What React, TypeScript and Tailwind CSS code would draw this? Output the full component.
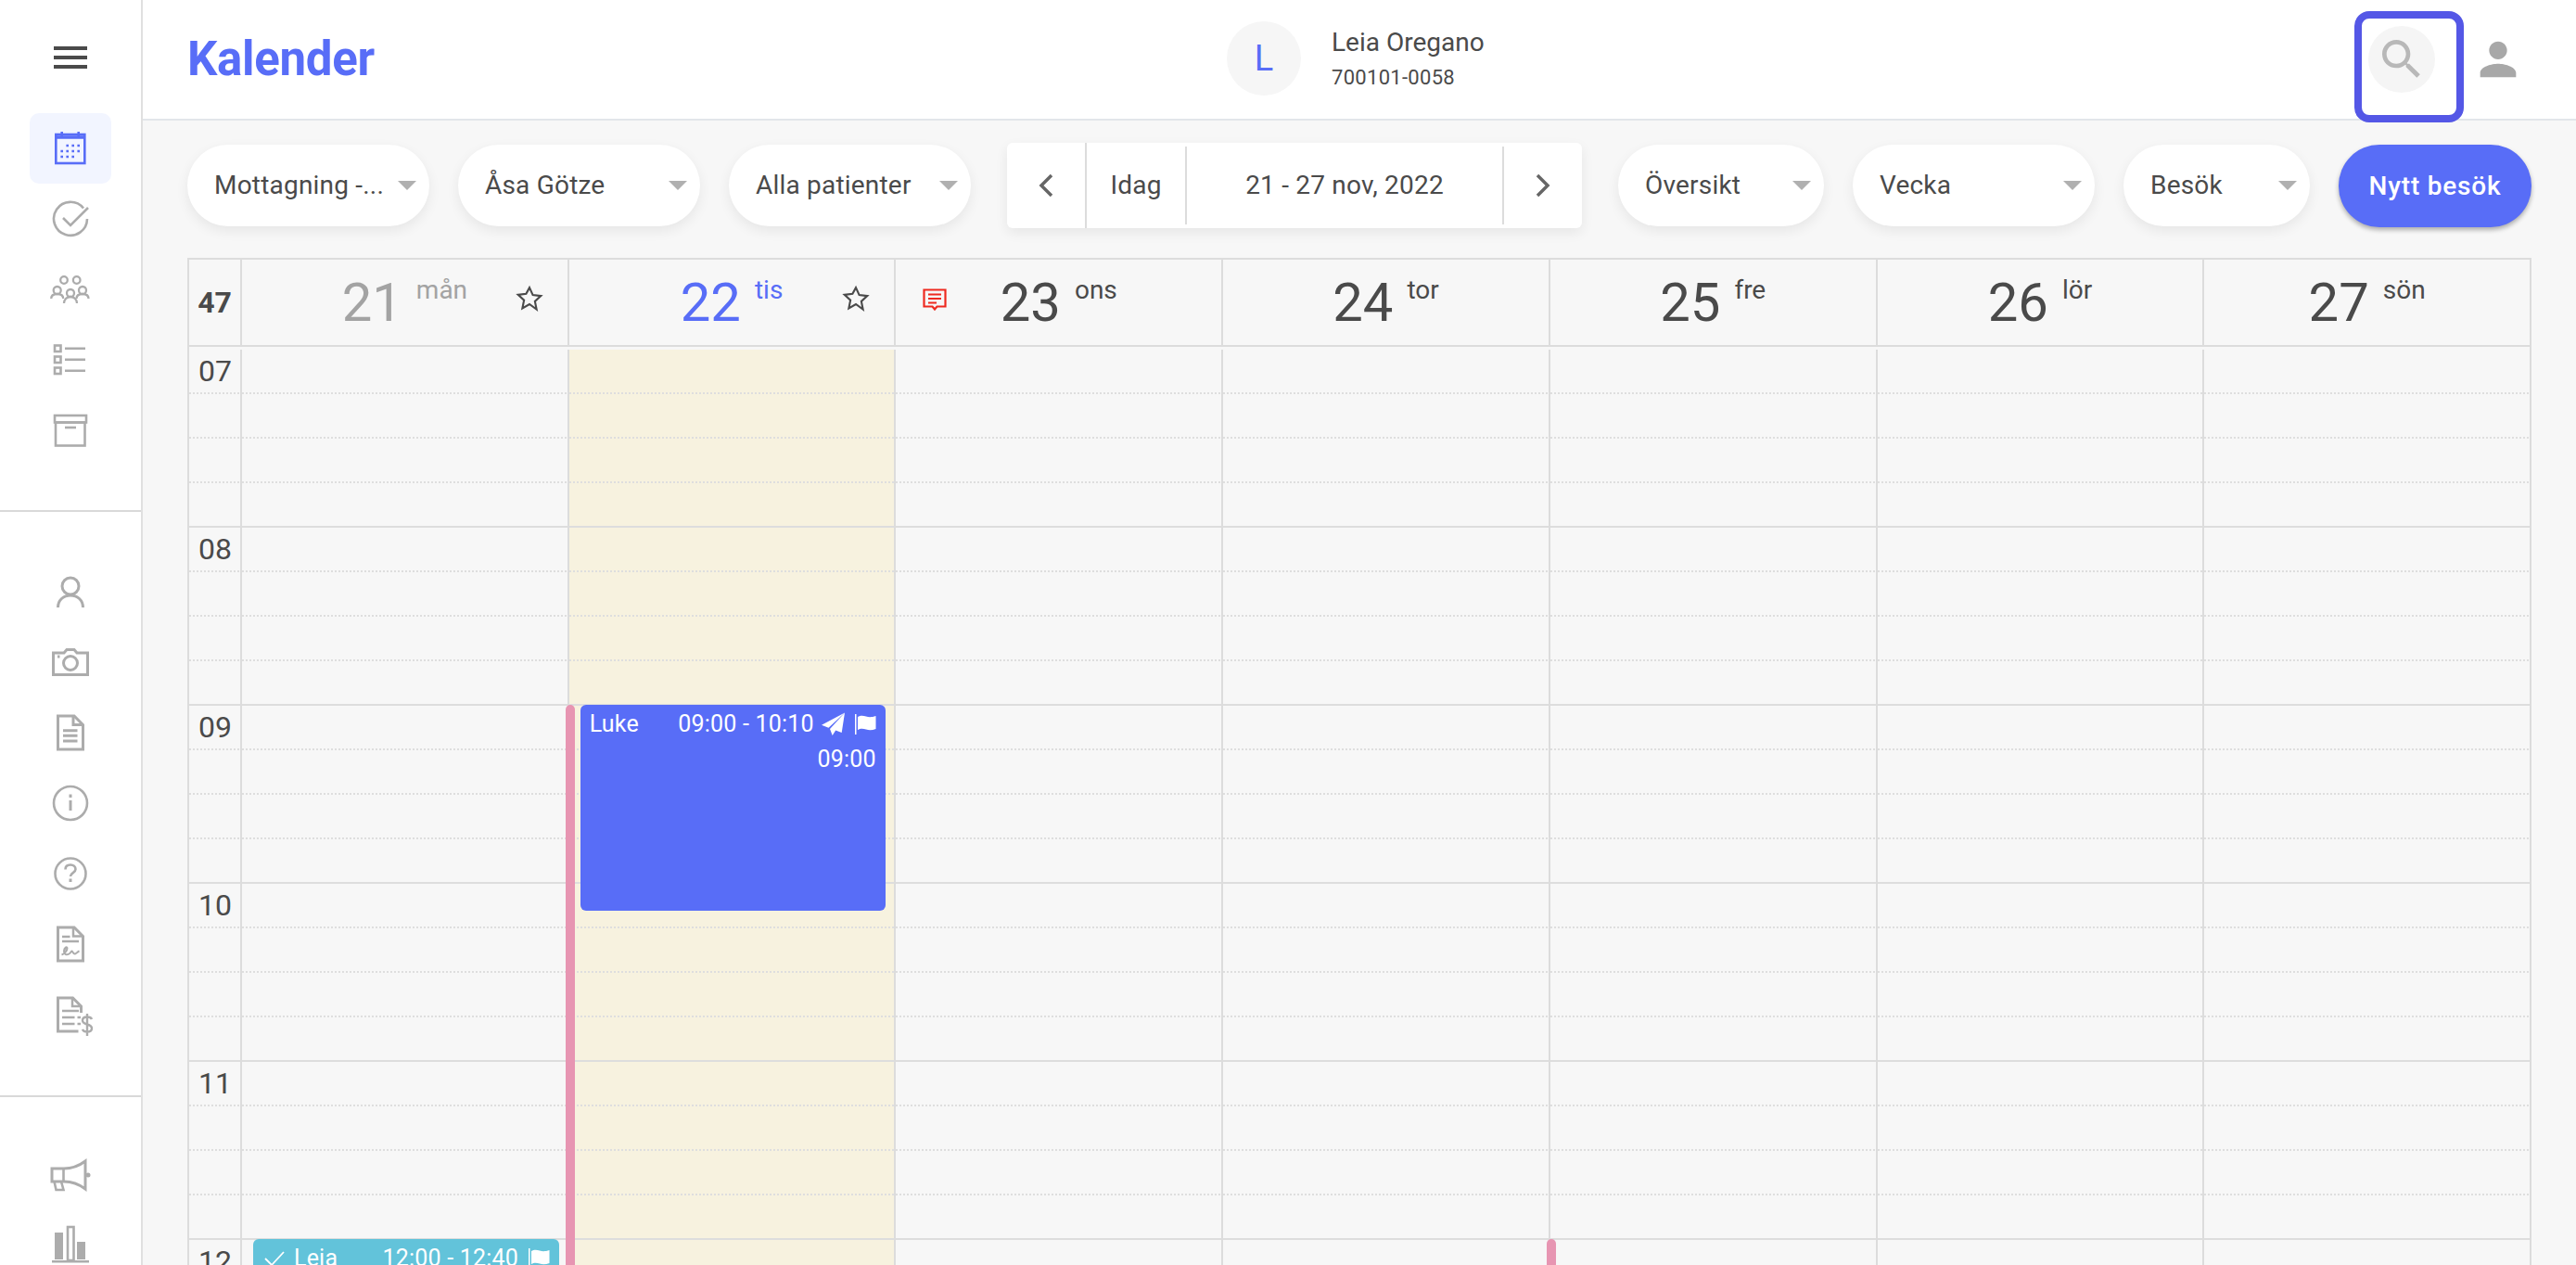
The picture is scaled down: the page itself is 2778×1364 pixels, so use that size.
import React from "react";

const G = "#acacac";
const BLUE = "#586df7";

function Stroke({ children, color = G, w = 2.6 }: { children: React.ReactNode; color?: string; w?: number }) {
  return (
    <svg width={44} height={44} viewBox="0 0 44 44" fill="none" stroke={color} strokeWidth={w} className="overflow-visible">
      {children}
    </svg>
  );
}

function Person({ x, y, big }: { x: number; y: number; big?: boolean }) {
  return (
    <g transform={`translate(${x} ${y})`}>
      <circle cx="0" cy="0" r="4" />
      <path d={big ? "M-7 11c0-4 3-7 7-7s7 3 7 7" : "M-6.500 9c0-3 2.500-5 6.500-5s6.500 2 6.500 5"} />
    </g>
  );
}

const icons: Record<string, React.ReactNode> = {
  calendar: (
    <Stroke color={BLUE}>
      <rect x="6.300" y="7" width="31" height="31" />
      <path d="M6 10h32" strokeWidth="3.500" />
      <path d="M12.700 4v5M30.700 4v5" />
      <path d="M17.400 19h2.600M23.400 19h2.600M29.400 19h2.600M11.400 25h2.600M17.400 25h2.600M23.400 25h2.600M29.400 25h2.600M11.400 31h2.600M17.400 31h2.600M23.400 31h2.600" />
    </Stroke>
  ),
  check: (
    <Stroke>
      <path d="M36 10.500A18 18 0 1 0 40 22" />
      <path d="M14 21l8 8L41 10" />
    </Stroke>
  ),
  group: (
    <Stroke w={2.3}>
      <circle cx="15" cy="12" r="3.800" />
      <circle cx="28.700" cy="12" r="3.800" />
      <Person x={7.700} y={23} />
      <Person x={35} y={23} />
      <Person x={22} y={26} big />
    </Stroke>
  ),
  list: (
    <Stroke>
      <rect x="5" y="6.500" width="6.500" height="6.500" />
      <rect x="5" y="18.500" width="6.500" height="6.500" />
      <rect x="5" y="30.500" width="6.500" height="6.500" />
      <path d="M16 9.700h22M16 21.700h22M16 33.700h22" />
    </Stroke>
  ),
  archive: (
    <Stroke>
      <rect x="5" y="6" width="34" height="7.500" />
      <rect x="6" y="13.500" width="31.500" height="25" />
      <path d="M16 19h12" />
    </Stroke>
  ),
  user: (
    <Stroke w={3}>
      <circle cx="22" cy="16" r="9" />
      <path d="M8.500 39c0-8 6-13 13.500-13s13.500 5 13.500 13" />
    </Stroke>
  ),
  camera: (
    <Stroke w={3}>
      <path d="M3.500 12h11.500l3-3.500h8l3 3.500h11.500v23.500H3.500z" />
      <circle cx="22" cy="23" r="7.500" />
      <path d="M8 16h2.500" />
    </Stroke>
  ),
  doc: (
    <Stroke w={3}>
      <path d="M8.500 4h17.500l9.500 9.500V40h-27z" />
      <path d="M25 4v9.500h10" />
      <path d="M14 19.700h15.500M14 25.200h15.500M14 31h15.500" />
    </Stroke>
  ),
  info: (
    <Stroke>
      <circle cx="22" cy="22" r="18" />
      <path d="M22 19v11" strokeWidth="3" />
      <path d="M22 12.500v3.500" strokeWidth="3" />
    </Stroke>
  ),
  help: (
    <Stroke>
      <circle cx="22" cy="22" r="16.500" />
      <path d="M16.500 17.500c0-3.500 2.500-5 5.500-5s5.500 1.800 5.500 4.800c0 4-5.500 3.700-5.500 7.700" />
      <path d="M22 27.500v3.500" strokeWidth="3" />
    </Stroke>
  ),
  sign: (
    <Stroke w={3}>
      <path d="M8.500 4h17.500l9.500 9.500V40h-27z" />
      <path d="M25 4v9.500h10" strokeWidth="2.500" />
      <path d="M13 14h8.500M13 19h18" strokeWidth="2.400" />
      <path d="M12.500 33.500c3-1 6-4.500 6-7s-3.500-1-3.500 3 3 4.500 5.500 3 2.500-4 3.500-2.500 1.500 3 3 2.500 3-2.500 4.500-3" strokeWidth="2" />
    </Stroke>
  ),
  invoice: (
    <Stroke w={3}>
      <path d="M30.500 40H8.500V4h16l9 9v7" />
      <path d="M24 4v9h9.500" strokeWidth="2.500" />
      <path d="M13 18h18M13 25h13.500M13 32h13.500M29.500 25h3.500M29.500 32h3.500" strokeWidth="2.400" />
      <path d="M45 27c-.7-1.800-2.300-2.500-5-2.500-3 0-5 1.200-5 3.800 0 5.500 10 2.900 10 8.400 0 2.600-2 3.800-5 3.800-2.800 0-4.400-.9-5-2.700M40 21v24" strokeWidth="2.400" />
    </Stroke>
  ),
  megaphone: (
    <Stroke w={3}>
      <path d="M2 16h13c9 0 17-3.500 23-8v30c-6-4.500-14-8-23-8H2z" />
      <path d="M14.500 16v14" strokeWidth="2.600" />
      <path d="M4.500 30l2 9h8l-2.500-9" strokeWidth="2.600" />
      <circle cx="41" cy="23" r="2.500" fill={G} stroke="none" />
    </Stroke>
  ),
  chart: (
    <svg width="44" height="44" viewBox="0 0 44 44" fill={G} className="overflow-visible">
      <rect x="5" y="9" width="9" height="29" />
      <rect x="19" y="3" width="6.500" height="36" fill="none" stroke={G} strokeWidth="2.600" />
      <rect x="29" y="19" width="9" height="19" />
      <rect x="2" y="39" width="40" height="2.500" />
    </svg>
  ),
};

function NavIcon({ name, active }: { name: string; active?: boolean }) {
  return (
    <div className={`w-[88px] h-[76px] flex items-center justify-center rounded-[10px] ${active ? "bg-[#f2f5ff]" : ""}`}>{icons[name]}</div>
  );
}

function Sidebar() {
  return (
    <aside className="w-[154px] shrink-0 h-full bg-white border-r-2 border-[#e0e0e0] flex flex-col">
      <div className="h-[122px] shrink-0 flex items-start justify-center pt-[50px]">
        <div className="w-[36px] h-[24px] flex flex-col justify-between">
          <div className="h-[4px] bg-[#4a4a4a]" />
          <div className="h-[4px] bg-[#4a4a4a]" />
          <div className="h-[4px] bg-[#4a4a4a]" />
        </div>
      </div>
      <div className="flex flex-col items-center">
        <NavIcon name="calendar" active />
        <NavIcon name="check" />
        <NavIcon name="group" />
        <NavIcon name="list" />
        <NavIcon name="archive" />
      </div>
      <div className="mt-[48px] h-[2px] bg-[#d9d9d9] shrink-0" />
      <div className="mt-[48px] flex flex-col items-center">
        {["user", "camera", "doc", "info", "help", "sign", "invoice"].map((n) => (
          <NavIcon key={n} name={n} />
        ))}
      </div>
      <div className="mt-[49px] h-[2px] bg-[#d9d9d9] shrink-0" />
      <div className="mt-[45px] flex flex-col items-center">
        <NavIcon name="megaphone" />
        <NavIcon name="chart" />
      </div>
    </aside>
  );
}

function Pill({ label, cls }: { label: string; cls: string }) {
  return (
    <div className={`mt-[2px] h-[88px] shrink-0 rounded-[44px] bg-white shadow-[0_5px_14px_rgba(0,0,0,0.07)] flex items-center justify-between pl-[29px] pr-[14px] text-[28px] tracking-[0.2px] text-[#4a4a4a] ${cls}`}>
      <span className="whitespace-nowrap">{label}</span>
      <span className="w-0 h-0 border-x-[10px] border-x-transparent border-t-[10px] border-t-[#b0b0b0]" />
    </div>
  );
}

function Header() {
  return (
    <header className="relative h-[130px] shrink-0 bg-white border-b-2 border-[#e2e6ea] flex items-center pl-[48px]">
      <h1 className="w-[1121px] shrink-0 text-[51px] font-bold text-[#586df7] tracking-[-0.3px]">Kalender</h1>
      <div className="w-[80px] h-[80px] rounded-full bg-[#f6f6f6] flex items-center justify-center text-[38px] text-[#586df7] -mt-[2px]">L</div>
      <div className="ml-[33px] text-[#4a4a4a]">
        <div className="text-[28px] leading-[32px]">Leia Oregano</div>
        <div className="text-[22px] leading-[28px] mt-[8px] tracking-[0.3px]">700101-0058</div>
      </div>
      <div className="ml-auto mr-[55px] flex items-center gap-[39px]">
        <div className="w-[72px] h-[72px] rounded-full bg-[#f5f5f5] flex items-center justify-center">
          <svg width="56" height="56" viewBox="0 0 24 24" fill="#b8b8b8">
            <path d="M15.500 14h-.79l-.28-.27C15.410 12.590 16 11.110 16 9.500 16 5.910 13.090 3 9.500 3S3 5.910 3 9.500 5.910 16 9.500 16c1.610 0 3.090-.59 4.230-1.570l.27.28v.79l5 4.990L20.490 19l-4.990-5zm-6 0C7.010 14 5 11.990 5 9.500S7.010 5 9.500 5 14 7.010 14 9.500 11.990 14 9.500 14z" />
          </svg>
        </div>
        <svg width="58" height="58" viewBox="0 0 24 24" fill="#a8a8a8">
          <path d="M12 12c2.210 0 4-1.790 4-4s-1.790-4-4-4-4 1.790-4 4 1.790 4 4 4zm0 2c-2.670 0-8 1.340-8 4v2h16v-2c0-2.660-5.330-4-8-4z" />
        </svg>
      </div>
      <div className="absolute left-[2385px] top-[12px] w-[118px] h-[120px] rounded-[16px] border-[8px] border-[#5457e6]" />
    </header>
  );
}

function NavBar() {
  return (
    <div className="mx-[8px] w-[620px] h-[92px] shrink-0 rounded-[6px] bg-white shadow-[0_5px_14px_rgba(0,0,0,0.07)] flex items-center text-[28px] tracking-[0.2px] text-[#4a4a4a]">
      <div className="w-[86px] h-full flex items-center justify-center border-r-2 border-[#dcdcdc]">
        <svg width="18" height="26" viewBox="0 0 18 26" fill="none" stroke="#666" strokeWidth="3.500"><path d="M15 2L4 13l11 11" /></svg>
      </div>
      <div className="w-[108px] h-[84px] flex items-center justify-center border-r-2 border-[#dcdcdc]">Idag</div>
      <div className="w-[342px] h-[84px] flex items-center justify-center border-r-2 border-[#dcdcdc]">21 - 27 nov, 2022</div>
      <div className="flex-1 h-full flex items-center justify-center">
        <svg width="18" height="26" viewBox="0 0 18 26" fill="none" stroke="#666" strokeWidth="3.500"><path d="M3 2l11 11L3 24" /></svg>
      </div>
    </div>
  );
}

function Toolbar() {
  return (
    <div className="h-[148px] shrink-0 pt-[24px] pl-[48px] flex items-start gap-[31px]">
      <Pill label="Mottagning -..." cls="w-[261px]" />
      <Pill label="Åsa Götze" cls="w-[261px]" />
      <Pill label="Alla patienter" cls="w-[261px]" />
      <NavBar />
      <Pill label="Översikt" cls="w-[222px]" />
      <Pill label="Vecka" cls="w-[261px]" />
      <Pill label="Besök" cls="w-[201px]" />
      <button className="mt-[2px] w-[208px] h-[89px] shrink-0 rounded-[44px] bg-[#586df7] text-white text-[28px] font-medium tracking-[0.8px] shadow-[0_3px_5px_rgba(0,0,0,0.3)]">Nytt besök</button>
    </div>
  );
}

const Star = () => (
  <svg width="30" height="30" viewBox="0 0 24 24" fill="none" stroke="#4a4a4a" strokeWidth="1.700">
    <path d="M12 2.500l2.900 6.400 6.900.8-5.100 4.700 1.400 6.900L12 16.800l-6.100 3.500 1.400-6.900-5.100-4.700 6.900-.8z" />
  </svg>
);

const days = [
  { n: "21", d: "mån", color: "text-[#a3a3a3]", star: true },
  { n: "22", d: "tis", color: "text-[#586df7]", star: true },
  { n: "23", d: "ons", color: "text-[#4a4a4a]", note: true },
  { n: "24", d: "tor", color: "text-[#4a4a4a]" },
  { n: "25", d: "fre", color: "text-[#4a4a4a]" },
  { n: "26", d: "lör", color: "text-[#4a4a4a]" },
  { n: "27", d: "sön", color: "text-[#4a4a4a]" },
];

function DayHead({ n, d, color, star, note }: { n: string; d: string; color: string; star?: boolean; note?: boolean }) {
  return (
    <div className={`relative border-l-2 border-[#dcdcdc] flex items-start justify-center gap-[15px] ${color}`}>
      <span className="text-[58px] leading-[66px] mt-[13px]">{n}</span>
      <span className="text-[28px] leading-[30px] mt-[18px]">{d}</span>
      {star && (
        <span className="absolute right-[26px] top-[27px]"><Star /></span>
      )}
      {note && (
        <svg className="absolute left-[29px] top-[31px]" width="26" height="24" viewBox="0 0 26 24" fill="none" stroke="#ee2a20" strokeWidth="2.200">
          <path d="M1.500 1.500h23v18h-9l-2.500 3-2.500-3h-9z" />
          <path d="M6 6.500h14M6 11h14M6 15.500h9" />
        </svg>
      )}
    </div>
  );
}

function Quarter({ label }: { label?: string }) {
  return (
    <div className="h-[48px] flex flex-col">
      <div className="h-[46px] text-[32px] leading-[46px] pl-[10px] text-[#4a4a4a]">{label}</div>
      <div className="h-[2px] bg-[repeating-linear-gradient(90deg,#dedede_0_2px,transparent_2px_4px)]" />
    </div>
  );
}

function HourCell({ label }: { label?: string }) {
  return (
    <div className="h-[192px] flex flex-col">
      <Quarter label={label} />
      <Quarter />
      <Quarter />
      <div className="h-[48px] border-b-2 border-[#dddddd]" />
    </div>
  );
}

const Plane = () => (
  <svg width="26" height="26" viewBox="0 0 26 26" fill="white">
    <path d="M25 .5L0 13.700l7.500 3z" />
    <path d="M25 .5L9 18l2.700 7 3.500-5.500 6.500 2.500z" />
  </svg>
);

const Flag = () => (
  <svg width="24" height="22" viewBox="0 0 24 22" fill="white">
    <rect x="1" y="0" width="1.500" height="22" />
    <path d="M4 3c3-2 6-1.500 9-.5s6 1 10.500-.5v14c-4 1.500-7.500 1.500-10.500.5s-6-1.500-9 .5z" />
  </svg>
);

function Grid() {
  const hours = ["07", "08", "09", "10", "11", "12"];
  return (
    <div className="ml-[48px] w-[2528px] flex-1 min-h-0 overflow-hidden border-t-2 border-x-2 border-[#dcdcdc]">
      <div className="grid grid-cols-[55px_repeat(7,1fr)] h-[94px] border-b-2 border-[#dcdcdc] mb-[3px]">
        <div className="flex items-center justify-center text-[32px] font-bold text-[#4a4a4a]">47</div>
        {days.map((d) => (
          <DayHead key={d.n} {...d} />
        ))}
      </div>
      <div className="grid grid-cols-[55px_repeat(7,1fr)]">
        <div>
          {hours.map((h) => (
            <HourCell key={h} label={h} />
          ))}
        </div>
        {days.map((d, i) => (
          <div key={d.n} className={`relative border-l-2 border-[#dcdcdc] ${i === 1 ? "bg-[#f7f2df]" : ""}`}>
            {hours.map((h) => (
              <HourCell key={h} />
            ))}
            {i === 1 && (
              <>
                <div className="absolute left-[-4px] top-[383px] bottom-0 w-[10px] rounded-t-[5px] bg-[#e795b2]" />
                <div className="absolute left-[12px] top-[383px] w-[329px] h-[222px] rounded-[6px] bg-[#586df7] text-white text-[25px] leading-[30px] tracking-[0.2px] pl-[10px] pr-[10px] pt-[6px]">
                  <div className="flex items-center">
                    <span className="flex-1">Luke</span>
                    <span className="mr-[8px]">09:00 - 10:10</span>
                    <Plane />
                    <span className="ml-[9px]"><Flag /></span>
                  </div>
                  <div className="text-right mt-[8px]">09:00</div>
                </div>
              </>
            )}
            {i === 0 && (
              <div className="absolute left-[12px] top-[959px] w-[330px] h-[72px] rounded-[6px] bg-[#62c3da] text-white text-[25px] leading-[30px] tracking-[0.2px] pl-[12px] pr-[10px] pt-[6px]">
                <div className="flex items-center">
                  <svg className="mr-[10px]" width="22" height="18" viewBox="0 0 22 18" fill="none" stroke="white" strokeWidth="1.800"><path d="M1 9l7 7L21 2" /></svg>
                  <span className="flex-1">Leia</span>
                  <span className="mr-[10px]">12:00 - 12:40</span>
                  <Flag />
                </div>
              </div>
            )}
            {i === 4 && <div className="absolute left-[-4px] top-[959px] bottom-0 w-[10px] rounded-t-[5px] bg-[#e795b2]" />}
          </div>
        ))}
      </div>
    </div>
  );
}

export default function App() {
  return (
    <div className="flex h-[1364px] w-[2778px] overflow-hidden bg-[#f7f7f7] font-['Roboto',sans-serif]">
      <Sidebar />
      <main className="flex-1 min-w-0 flex flex-col h-full">
        <Header />
        <Toolbar />
        <Grid />
      </main>
    </div>
  );
}
